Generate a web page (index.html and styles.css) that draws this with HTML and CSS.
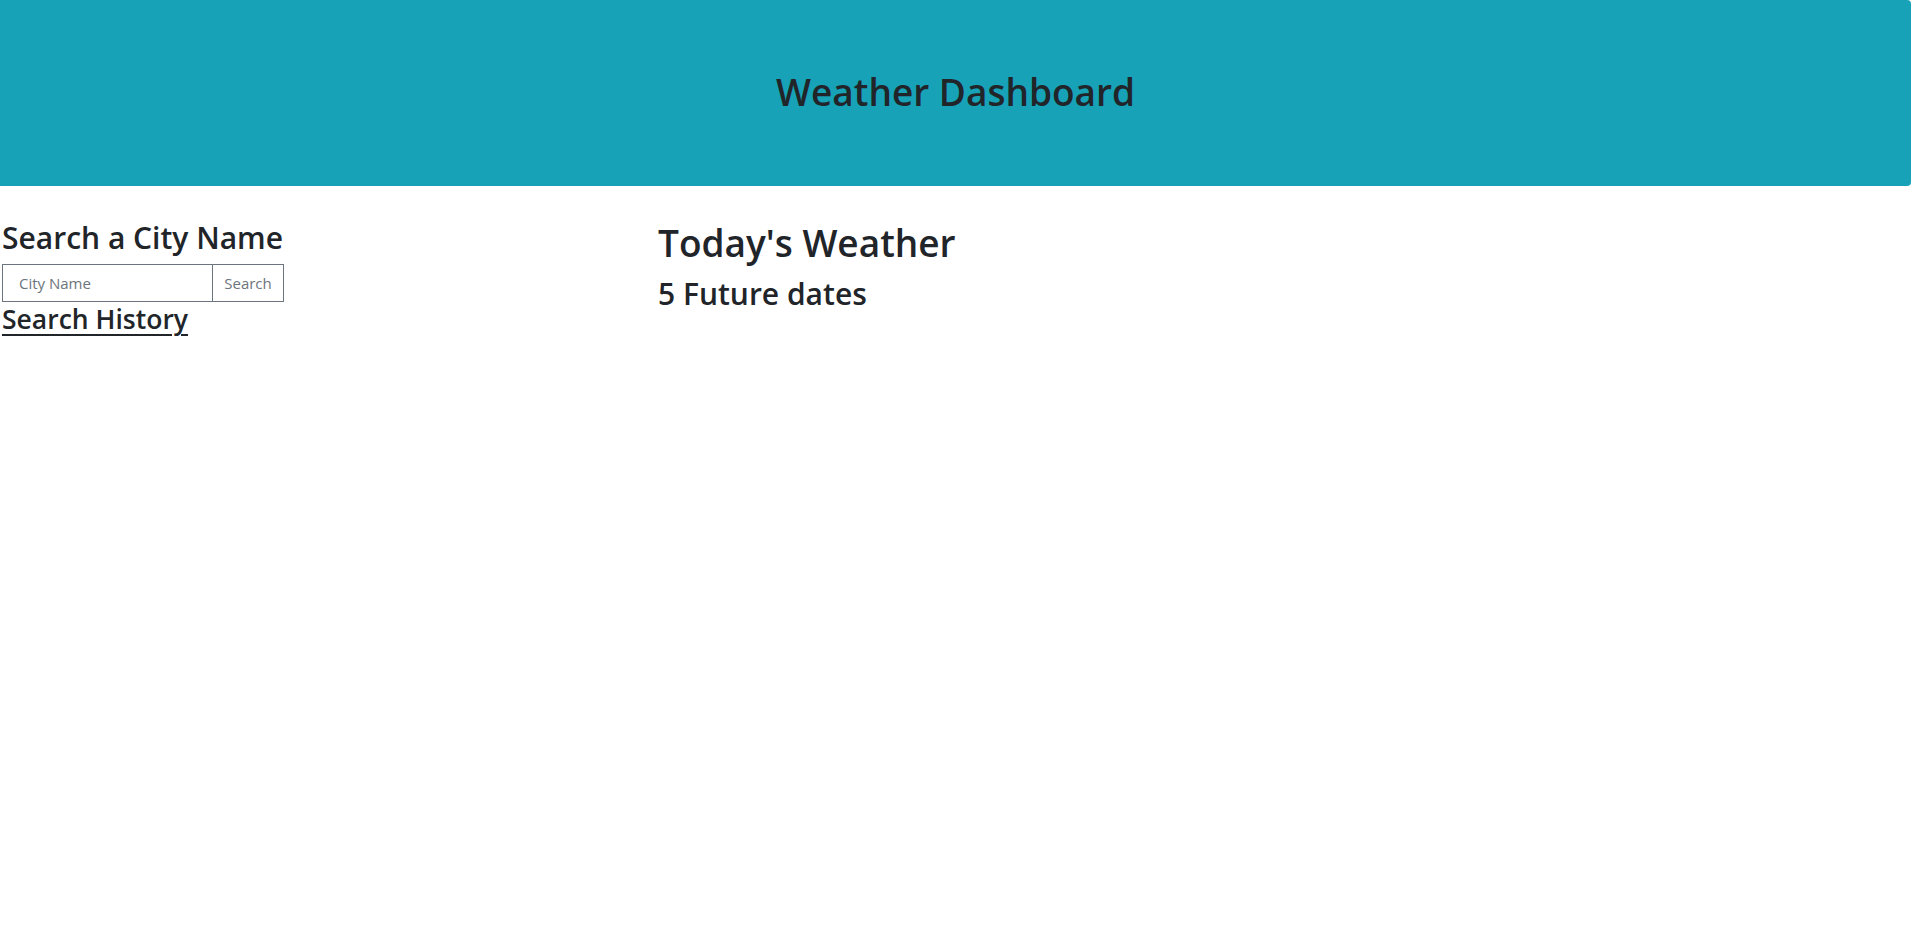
FILE: index.html
```html
<!DOCTYPE html>
<html lang="en">
<head>
<meta charset="utf-8">
<title>Weather Dashboard</title>
<link rel="stylesheet" href="styles.css">
</head>
<body>
<header class="hero">
  <h1 class="hero-title">Weather Dashboard</h1>
</header>
<main class="layout">
  <section class="side">
    <h2 class="side-title">Search a City Name</h2>
    <form class="search-group">
      <input class="search-input" type="text" placeholder="City Name">
      <button class="search-btn" type="button">Search</button>
    </form>
    <h4 class="history-title">Search History</h4>
  </section>
  <section class="content">
    <h1 class="today-title">Today's Weather</h1>
    <h2 class="future-title">5 Future dates</h2>
  </section>
</main>
</body>
</html>
```
FILE: styles.css
```css
* { box-sizing: border-box; }
body {
  margin: 0;
  font-family: "Open Sans", "Noto Sans", sans-serif;
  color: #212529;
  background: #fff;
}
h1, h2, h4 { margin: 0 0 8px; font-weight: 600; line-height: 1.2; }
.hero {
  background: #17a2b8;
  width: 1911px;
  height: 186px;
  padding: 68px 32px 0;
  border-radius: 0 4px 4px 0;
  margin-bottom: 31px;
  text-align: center;
}
.hero-title { font-size: 37px; line-height: 48px; margin: 0; }
.layout { display: flex; }
.side { width: 656px; padding-left: 2px; }
.side-title { font-size: 30px; line-height: 38px; margin-top: 2px; margin-bottom: 7px; }
.search-group { display: flex; margin: 0; }
.search-input {
  width: 210px;
  height: 38px;
  border: 1px solid #6c757d;
  border-right: none;
  padding: 6px 16px;
  font: 15px "Open Sans", "Noto Sans", sans-serif;
  color: #495057;
}
.search-input::placeholder { color: #6c757d; }
.search-btn {
  width: 72px;
  height: 38px;
  border: 1px solid #6c757d;
  background: #fff;
  color: #6c757d;
  font: 15px "Open Sans", "Noto Sans", sans-serif;
  padding: 0;
}
.history-title {
  font-size: 26.5px;
  line-height: 34px;
  margin: 0;
  display: inline-block;
  text-decoration: underline;
  text-decoration-thickness: 2px;
  text-underline-offset: 5px;
}
.content { padding-left: 2px; }
.today-title { font-size: 37px; line-height: 48px; margin-top: 2px; }
.future-title { font-size: 30px; line-height: 38px; }
```
